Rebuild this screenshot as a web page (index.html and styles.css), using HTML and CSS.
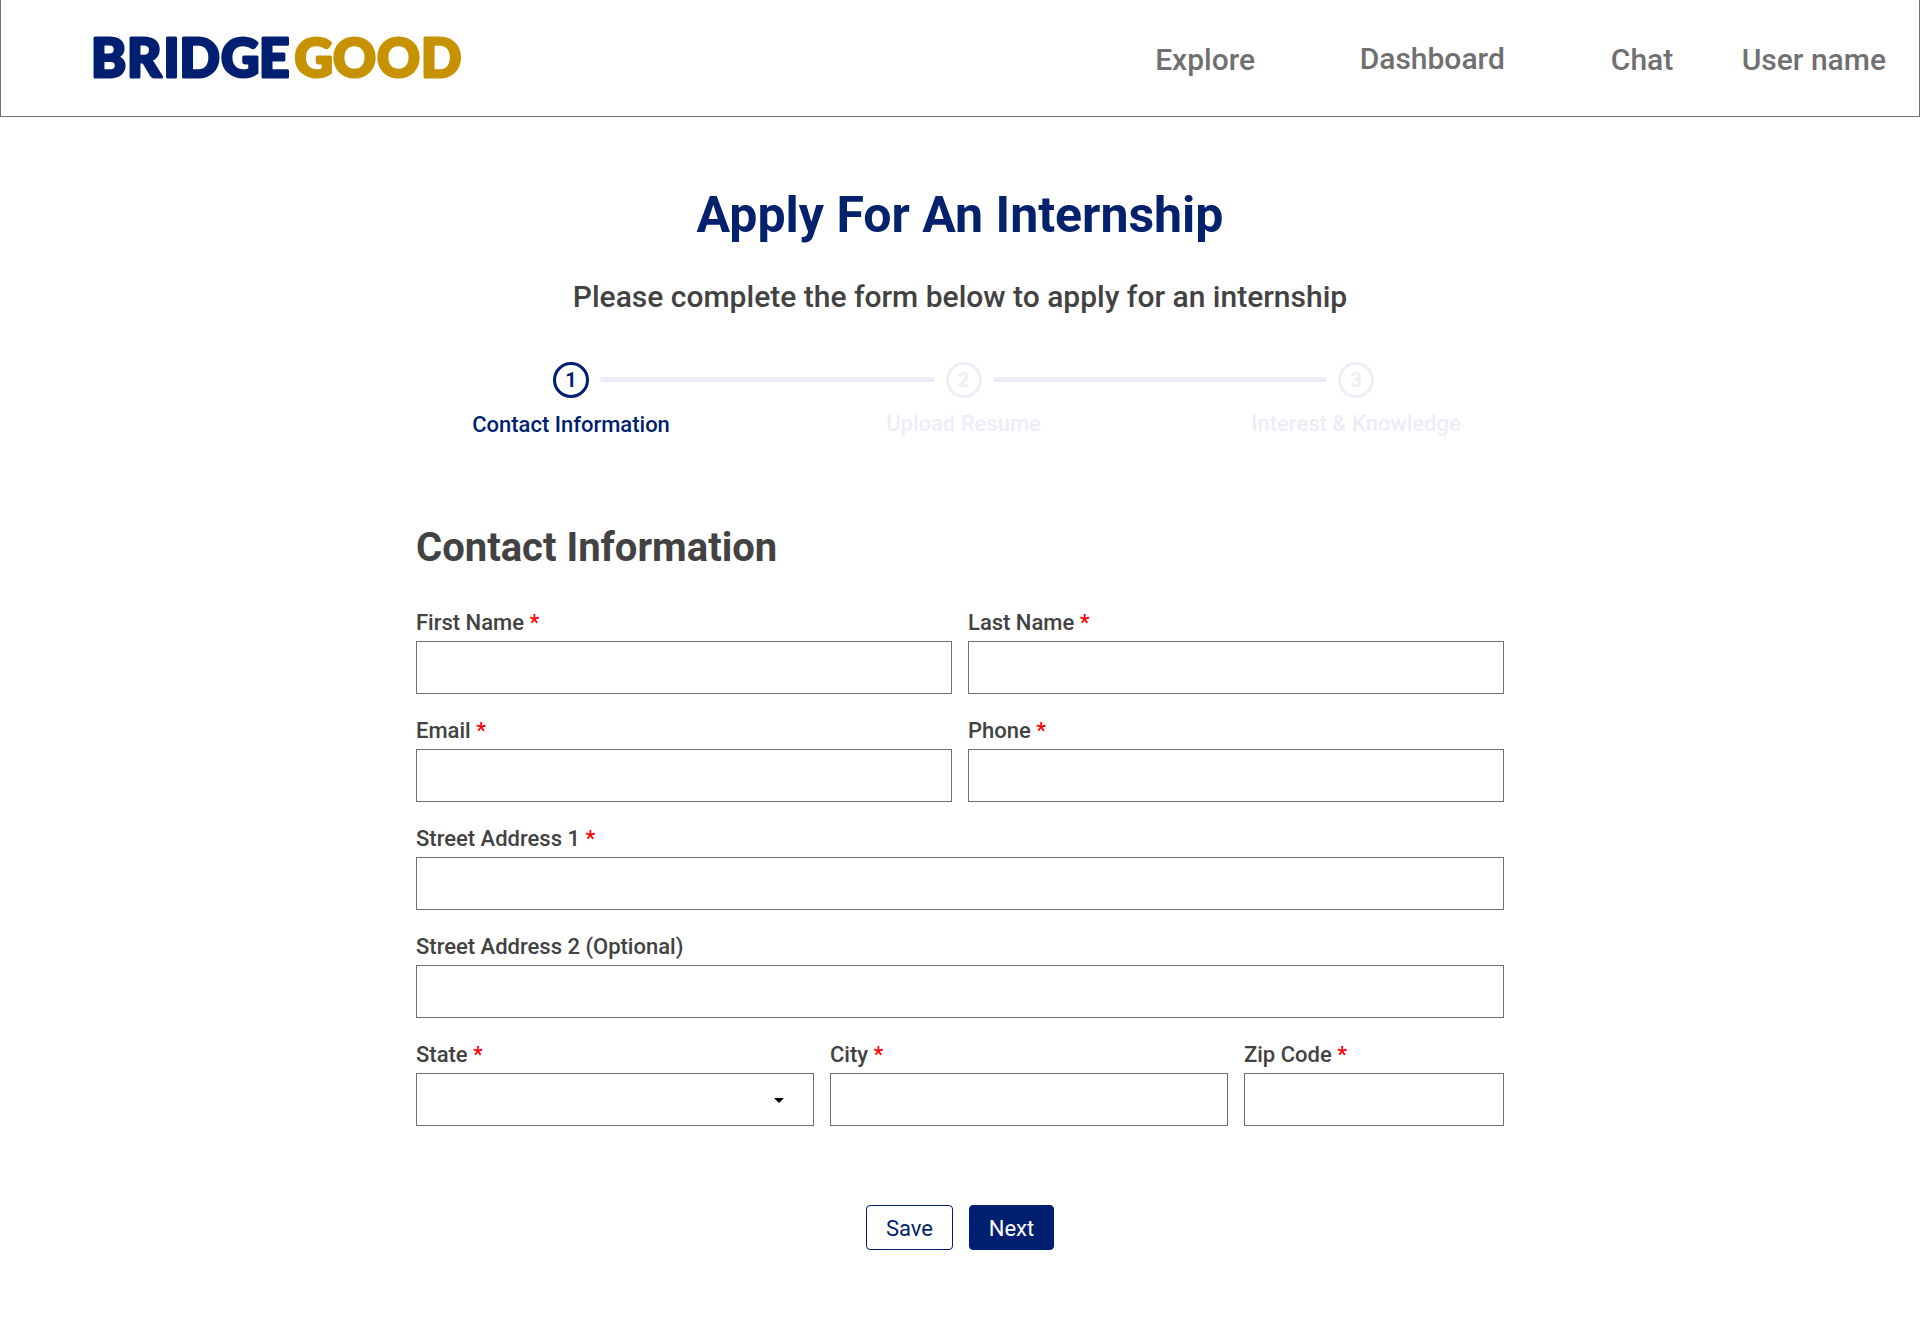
FILE: index.html
```html
<!DOCTYPE html>
<html lang="en">
<head>
<meta charset="utf-8">
<title>Apply For An Internship</title>
<link rel="stylesheet" href="styles.css">
</head>
<body>
<header class="header">
  <svg class="logo" width="368" height="44" viewBox="0 0 368 44" role="img" aria-label="BRIDGEGOOD">
    <text class="logo-navy" y="41" x="-2 34 70.5 86.5 128 166">BRIDGE</text>
    <text class="logo-gold" y="41" x="201.5 240 284 328">GOOD</text>
  </svg>
  <nav class="nav">
    <a class="nav-explore">Explore</a>
    <a class="nav-dashboard">Dashboard</a>
    <a class="nav-chat">Chat</a>
    <a class="nav-user">User name</a>
  </nav>
</header>
<main class="main">
  <h1 class="title">Apply For An Internship</h1>
  <p class="subtitle">Please complete the form below to apply for an internship</p>
  <ol class="steps">
    <li class="step step-active"><span class="dot">1</span><span class="step-label">Contact Information</span></li>
    <li class="bar"></li>
    <li class="step"><span class="dot">2</span><span class="step-label">Upload Resume</span></li>
    <li class="bar"></li>
    <li class="step"><span class="dot">3</span><span class="step-label">Interest &amp; Knowledge</span></li>
  </ol>
  <form class="form">
    <h2 class="heading">Contact Information</h2>
    <div class="row">
      <label class="field">First Name <b class="req">*</b><input class="input" type="text"></label>
      <label class="field">Last Name <b class="req">*</b><input class="input" type="text"></label>
    </div>
    <div class="row">
      <label class="field">Email <b class="req">*</b><input class="input" type="text"></label>
      <label class="field">Phone <b class="req">*</b><input class="input" type="text"></label>
    </div>
    <div class="row">
      <label class="field">Street Address 1 <b class="req">*</b><input class="input" type="text"></label>
    </div>
    <div class="row">
      <label class="field">Street Address 2 (Optional)<input class="input" type="text"></label>
    </div>
    <div class="row row-place">
      <label class="field">State <b class="req">*</b>
        <span class="input select"><svg width="10" height="5" viewBox="0 0 10 5"><path d="M0 0h10L5 5z"/></svg></span>
      </label>
      <label class="field">City <b class="req">*</b><input class="input" type="text"></label>
      <label class="field">Zip Code <b class="req">*</b><input class="input" type="text"></label>
    </div>
    <div class="actions">
      <button class="btn btn-save" type="button">Save</button>
      <button class="btn btn-next" type="button">Next</button>
    </div>
  </form>
</main>
</body>
</html>
```
FILE: styles.css
```css
* { box-sizing: border-box; }

body {
  margin: 0;
  background: #fff;
  color: #424242;
  font-family: Roboto, sans-serif;
}

.header {
  display: flex;
  align-items: flex-start;
  justify-content: space-between;
  height: 117px;
  padding: 36px 33px 0 92px;
  border: 1px solid #707070;
  border-top: 0;
}

.logo { overflow: visible; }
.logo text {
  font: 900 53px Lato, sans-serif;
  stroke-width: 3px;
  stroke-linejoin: round;
}
.logo-navy { fill: #001f70; stroke: #001f70; }
.logo-gold { fill: #c79200; stroke: #c79200; }

.nav {
  display: flex;
  padding-top: 6px;
  color: #707070;
  font-size: 30px;
  font-weight: 500;
  line-height: 36px;
}
.nav-explore { margin-right: 104.5px; }
.nav-dashboard { margin: -1px 106px 0 0; }
.nav-chat { margin-right: 68.5px; }

.main {
  display: flex;
  flex-direction: column;
  align-items: center;
  padding-top: 68px;
}

.title {
  margin: 0;
  color: #04216e;
  font-size: 50px;
  font-weight: 700;
  line-height: 60px;
}

.subtitle {
  margin: 34px 0 47px;
  font-size: 30px;
  font-weight: 500;
  line-height: 36px;
}

.steps {
  display: flex;
  gap: 11px;
  height: 76px;
  margin: 0 0 0 7px;
  padding: 0;
  list-style: none;
  color: #ededf8;
}
.step {
  display: flex;
  flex-direction: column;
  align-items: center;
  width: 36px;
}
.dot {
  display: flex;
  align-items: center;
  justify-content: center;
  width: 36px;
  height: 36px;
  flex: none;
  border: 3px solid currentColor;
  border-radius: 50%;
  font-size: 20px;
  font-weight: 700;
  line-height: 24px;
}
.step-label {
  margin-top: 13px;
  font-size: 22px;
  font-weight: 500;
  line-height: 26px;
  white-space: nowrap;
}
.step-active { color: #001f70; }
.step-active .step-label { margin-top: 14px; }
.bar {
  width: 334.5px;
  height: 5px;
  margin-top: 15px;
  border-radius: 3px;
  background: #ededf8;
}

.form { width: 1088px; margin-top: 86px; }

.heading {
  margin: 0 0 38px;
  font-size: 40px;
  font-weight: 700;
  line-height: 48px;
}

.row {
  display: grid;
  grid-auto-flow: column;
  grid-auto-columns: 1fr;
  gap: 16px;
  margin-bottom: 24px;
}
.row-place {
  grid-template-columns: 398px 398px 260px;
}

.field {
  font-size: 22px;
  font-weight: 500;
  line-height: 26px;
}
.req { color: #f00; font-weight: 500; }

.input {
  display: block;
  width: 100%;
  height: 53px;
  margin: 5px 0 0;
  padding: 0 16px;
  border: 1px solid #707070;
  border-radius: 0;
  background: #fff;
}
.select {
  display: flex;
  align-items: center;
  justify-content: flex-end;
  padding: 1px 29px 0 0;
}

.actions {
  display: flex;
  justify-content: center;
  gap: 16px;
  margin-top: 79px;
}
.btn {
  height: 45px;
  padding: 2px 0 0;
  border: 1px solid #001f70;
  border-radius: 4px;
  font: 400 22px/26px Roboto, sans-serif;
}
.btn-save { width: 87px; background: #fff; color: #001f70; }
.btn-next { width: 85px; background: #001f70; color: #fff; }
```
